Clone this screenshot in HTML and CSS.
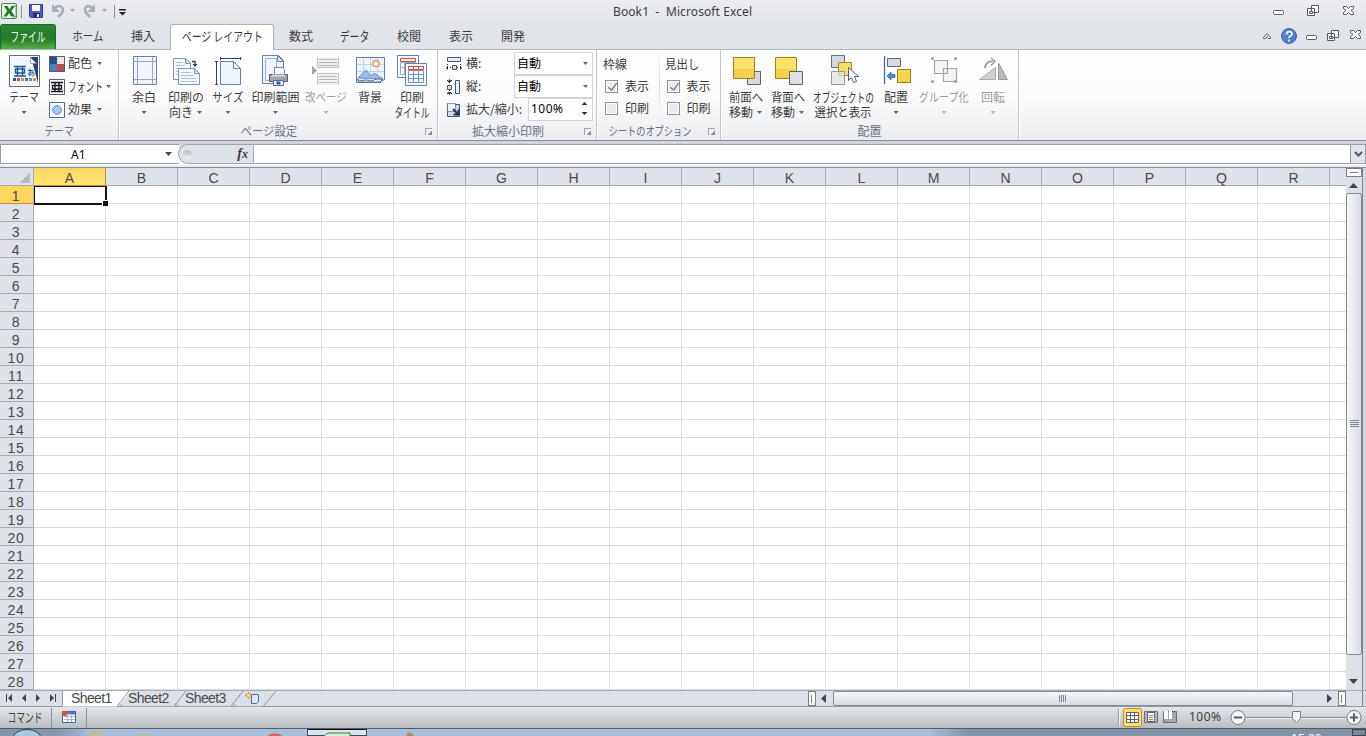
FILE: index.html
```html
<!DOCTYPE html>
<html lang="ja">
<head>
<meta charset="utf-8">
<title>Book1 - Microsoft Excel</title>
<link rel="stylesheet" href="styles.css">
</head>
<body>
<div class="app">
  <header class="titlebar">
    <svg class="qat" width="130" height="24" viewBox="0 0 130 24">
      <rect x="1.5" y="3.500" width="15" height="15" rx="1.500" fill="#e9f3e6" stroke="#3d8b43"/>
      <path d="M13 6h3v11h-3" fill="#fff" stroke="#69aa6c"/>
      <path d="M4 6h3.500l2 3.500L11.500 6H15l-3.600 5 3.600 5.500h-3.800L9 13l-2.200 3.500H3.500l3.700-5.500z" fill="#24762f"/>
      <path d="M21.500 5v13M114.500 5v13" stroke="#8b8f96"/>
      <path d="M29.500 4.500h13v13h-12l-1-1z" fill="#4c5dc9" stroke="#2f3c93"/>
      <path d="M32 5h8v6h-8z" fill="#f4f7fd"/><path d="M33 13h7v4h-7z" fill="#283064"/><path d="M37 14h2v3h-2z" fill="#e8edf7"/>
      <g fill="none" stroke="#a9afb8" stroke-width="2.500"><path d="M54 9c4-5 9-3 9 1 0 3-2 4-5 7"/><path d="M93 9c-4-5-8-3-8 1 0 3 2 4 5 7"/></g>
      <path d="M52 4v8h8zM95 4v8h-8z" fill="#a9afb8"/>
      <path d="M70 9h5l-2.500 3zM102 9h5l-2.500 3z" fill="#a2a7ae"/>
      <path d="M119 9h7v1.500h-7zM119 12h7l-3.500 3.500z" fill="#222"/>
    </svg>
    <div class="title">Book1&nbsp; -&nbsp; Microsoft Excel</div>
    <svg class="wbtn" width="96" height="24" viewBox="0 0 96 24" fill="#fff" stroke="#565b6e">
      <rect x="3.500" y="10.500" width="10" height="4" rx="1"/>
      <path d="M41.500 5.500h7v7h-7zM37.500 8.500h7v7h-7z"/><path d="M39.500 11.500h3v2h-3z"/>
      <path d="M73.500 6.500h3l2 2 2-2h3v2l-2.500 2 2.500 2v2h-3l-2-2-2 2h-3v-2l2.500-2-2.500-2z"/>
    </svg>
  </header>
  <nav class="tabs">
    <div class="tab file"><span class="k13 s68">ファイル</span></div>
    <div class="tab w63"><span class="s86">ホーム</span></div>
    <div class="tab w48">挿入</div>
    <div class="tab on"><span class="k13 s75">ページ レイアウト</span></div>
    <div class="tab">数式</div>
    <div class="tab"><span class="k13 s75">データ</span></div>
    <div class="tab">校閲</div>
    <div class="tab w50">表示</div>
    <div class="tab">開発</div>
    <svg class="tabbtn" width="106" height="24" viewBox="0 0 106 24" fill="#fff" stroke="#565b62">
      <path d="M3.500 12.500l3.500-4 3.500 4v1h-2l-1.500-2-1.500 2h-2z"/>
      <circle cx="29" cy="11" r="7.500" fill="#4d83d0" stroke="#3b67ad"/>
      <path d="M26.500 9.500c0-4 5.500-3.500 5.500-.8 0 2-3 2-3 4.300M29 14.500v2" fill="none" stroke="#fff" stroke-width="1.800"/>
      <rect x="46.500" y="10.500" width="10" height="4" rx="1"/>
      <path d="M71.500 5.500h7v7h-7zM67.500 8.500h7v7h-7zM69.500 11.500h3v2h-3z"/>
      <path d="M90.500 5.500h3l2 2 2-2h3v2l-2.500 2 2.500 2v2h-3l-2-2-2 2h-3v-2l2.500-2-2.500-2z"/>
    </svg>
  </nav>
  <section class="ribbon">
    <div class="group g-theme">
      <div class="gbody">
        <div class="big w48">
          <svg width="32" height="32" viewBox="0 0 32 32"><path d="M1.500.5h30v31h-30z" fill="#fff" stroke="#5b6b84"/><path d="M3 2h27v28H3z" fill="#f3f7fc"/><path d="M23 2h7v26z" fill="#26446f"/><path d="M22.500 2.500v6h6z" fill="#fff" stroke="#6b84a6" stroke-width=".7"/><path d="M6 11.500h12M6 21h12M9.500 12v9M14.500 12v9M7.500 14h9v4h-9z" fill="none" stroke="#1f579b" stroke-width="1.400"/><path d="M20 15.500h5M22 13.500v7M25 16.500c-1 4.500-4.500 4.500-4.500 2.500s5.500-3 5.500 0-2 2-2 2" fill="none" stroke="#1f579b"/><path d="M5 23h3v3H5z" fill="#2a5a94"/><path d="M9 23h3v3H9z" fill="#c44b45"/><path d="M13 23h3v3h-3z" fill="#91b04c"/><path d="M17 23h3v3h-3z" fill="#7b5c9e"/><path d="M21 23h3v3h-3z" fill="#3fa3bf"/><path d="M25 23h3v3h-3z" fill="#ef8b32"/></svg>
          <span class="s80">テーマ</span><i class="ar"></i>
        </div>
        <div class="smalls">
          <div class="small"><svg width="16" height="16"><path d="M0 0h8v8H0z" fill="#27508b"/><path d="M8 0h8v8H8z" fill="#e9e6df"/><path d="M0 8h8v8H0z" fill="#4b83c1"/><path d="M8 8h8v8H8z" fill="#c24a48"/><path d="M.5.5h15v15H.5z" fill="none" stroke="#4f5d77"/></svg><span>配色</span><i class="ar"></i></div>
          <div class="small"><svg width="16" height="16"><path d="M.5.5h15v15H.5z" fill="#fff" stroke="#4f5d77"/><path d="M2 3.500h12M2 12.500h12M6 4v8M10 4v8M3.500 6.500h9v3.500h-9z" fill="none" stroke="#111" stroke-width="1.300"/></svg><span class="font-l"><b class="k13 s68">フォント</b></span><i class="ar"></i></div>
          <div class="small"><svg width="16" height="16"><path d="M.5.5h15v15H.5z" fill="#fff" stroke="#4f6a94"/><circle cx="8" cy="8" r="4.300" fill="#a9caf3" stroke="#5d8ace"/></svg><span>効果</span><i class="ar"></i></div>
        </div>
      </div>
      <div class="gname"><span class="s80">テーマ</span></div>
    </div>
    <div class="group g-page">
      <div class="gbody">
        <div class="big w42">
          <svg width="32" height="32" viewBox="0 0 32 32"><path d="M5.500 1.500h23v28h-23z" fill="#f1f5fb" stroke="#6b7f9e"/><path d="M9.500 2v27M24.500 2v27M6 6.500h22M6 24.500h22" stroke="#94a7c2"/></svg>
          <span>余白</span><i class="ar"></i></div>
        <div class="big w42">
          <svg width="32" height="32" viewBox="0 0 32 32" fill="#f5f8fd" stroke="#7f96b9"><path d="M3.500 3.500h12l5 5v16h-17z"/><path d="M15.500 3.500v5h5z" fill="#d4e1f3"/><path d="M6 7.500h7M6 10.500h9M6 13.500h5M6 16.500h3M6 19.500h3" stroke="#afbfd6"/><path d="M8.500 13.500h16l5 5v11h-21z"/><path d="M24.500 13.500v5h5z" fill="#d4e1f3"/><path d="M11 17.500h10M11 20.500h12M11 23.500h15M11 26.500h15" stroke="#afbfd6"/><path d="M22 6.500h3V10" fill="none" stroke="#2c3f6c" stroke-width="1.300"/><path d="M22.500 9h5L25 12z" fill="#2c3f6c" stroke="none"/></svg>
          <span>印刷の</span><em>向き<i class="ar"></i></em></div>
        <div class="big w42">
          <svg width="32" height="32" viewBox="0 0 32 32"><path d="M8.500 6.500h13l7 7v16h-20z" fill="#eff4fc" stroke="#6680a5"/><path d="M21.500 6.500v7h7z" fill="#fff" stroke="#6680a5"/><path d="M8 3.500h21M8.500 2v3M28.500 2v3M4.500 7v23M3 6.500h3M3 29.500h3" fill="none" stroke="#253f86"/></svg>
          <span class="s86">サイズ</span><i class="ar"></i></div>
        <div class="big w53">
          <svg width="32" height="32" viewBox="0 0 32 32"><path d="M2.500.5h16l5 5v23h-21z" fill="#eff4fc" stroke="#6680a5"/><path d="M5.500 3.500h11v22h-11z" fill="none" stroke="#9db0cc"/><path d="M17.500.5v6h6z" fill="#dbe6f5" stroke="#6680a5"/><path d="M14.500 12.500h8l2 2v6h-10z" fill="#f7faff" stroke="#6c80a2"/><path d="M9.500 19.500h18v7h-18z" fill="#a2a7b1" stroke="#585e69"/><path d="M12 20.500h13" stroke="#d9dce2" stroke-width="2"/><path d="M24 24h2v1h-2z" fill="#4caf50"/><path d="M13.500 25.500h10v5h-10z" fill="#f1f6fe" stroke="#516c9a"/><path d="M16.500 28h4" stroke="#2a5ba3" stroke-width="3"/></svg>
          <span>印刷範囲</span><i class="ar"></i></div>
        <div class="big w48 off">
          <svg width="32" height="32" viewBox="0 0 32 32"><path d="M7.500 2v10.500h21V2M7.500 30V18.500h21V30" fill="#f1f1f3" stroke="#c0c1c4"/><path d="M9 4.500h18M9 7.500h18M9 10.500h18M9 21.500h18M9 24.500h18M9 27.500h18" stroke="#b5b6ba"/><path d="M2 11l5 4.500L2 20z" fill="#a0a2a5"/></svg>
          <span class="s86">改ページ</span><i class="ar"></i></div>
        <div class="big w40">
          <svg width="32" height="32" viewBox="0 0 32 32"><path d="M2.500 2.500h28v22l-4 3h-24z" fill="#edf4fc" stroke="#627da8"/><path d="M9.500 3v21M16.500 3v21M23.500 3v21M3 9.500h27M3 16.500h27" stroke="#c1d2e9"/><circle cx="22" cy="8.500" r="3.200" fill="#fff1da" stroke="#ed8e4e" stroke-width="1.300"/><path d="M4 23l8-8 5 6 3-3 9 6z" fill="#9dbbe8" stroke="#6b90c9"/><path d="M3 24c4 3 6 1 9 1s5 2 8 0 6 0 9-1l-3 3H5z" fill="#fff" stroke="#576a8d"/></svg>
          <span>背景</span></div>
        <div class="big w44">
          <svg width="32" height="32" viewBox="0 0 32 32" fill="#f8fbff" stroke="#657fa8"><path d="M1.500.5h21v22h-21z"/><path d="M4.500 7.500h15v12h-15zM8.500 8v12M13 8v12M4 12.500h15" stroke="#95aed0"/><path d="M4.500 3.500h15v3h-15z" fill="#fff" stroke="#d54c24"/><path d="M9.500 8.500h21v22h-21z"/><path d="M12.500 15.500h15v12h-15zM17.500 16v12M22.500 16v12M12 19.500h15M12 23.500h15" fill="#fff" stroke="#6d90c4"/><path d="M12.500 11.500h15v3h-15zM17.500 11v3M22.500 11v3" fill="#fff" stroke="#d54c24"/></svg>
          <span>印刷</span><em><b class="k13 s68">タイトル</b></em></div>
      </div>
      <div class="gname"><span class="s92">ページ設定</span><i class="launch"></i></div>
    </div>
    <div class="group g-scale">
      <div class="gbody rows">
        <div class="srow"><svg width="16" height="16"><path d="M1.500 1.500h13v4h-13z" fill="#e8f0fa" stroke="#3f5478"/><path d="M1.500 8v6M14.500 8v6M4 11.500h2M11 11.500h2" stroke="#222" stroke-dasharray="1 1"/><path d="M0 12l2-2v4zM16 12l-2-2v4z" fill="#222"/><path d="M6.500 9.500h4v4h-4z" fill="#ddd" stroke="#555"/></svg><label>横:</label><div class="combo">自動<i class="ar"></i></div></div>
        <div class="srow"><svg width="16" height="16"><path d="M9.500 1.500h4v13h-4z" fill="#e8f0fa" stroke="#3f5478"/><path d="M1 1.500h6M1 14.500h6M3.500 3v2M3.500 11v2" stroke="#222" stroke-dasharray="1 1"/><path d="M3.500 0l2 3h-4zM3.500 16l2-3h-4z" fill="#222"/><path d="M1.500 6.500h4v4h-4z" fill="#ddd" stroke="#555"/></svg><label>縦:</label><div class="combo">自動<i class="ar"></i></div></div>
        <div class="srow"><svg width="16" height="16"><path d="M1.500 2.500h12v12h-12z" fill="#cfdaeb" stroke="#41557c"/><path d="M1.500 1.500h8v8h-8z" fill="#eef4fb" stroke="#2a3e63" stroke-dasharray="1 1"/><path d="M7 7l5 5M7.500 12.500h5v-5" fill="none" stroke="#1e2e50" stroke-width="1.800"/></svg><label>拡大/縮小:</label><div class="combo spin">100%<svg width="7" height="15" viewBox="0 0 7 15"><path d="M.5 4L3.500 1l3 3zM.5 11l3 3 3-3z" fill="#333"/></svg></div></div>
      </div>
      <div class="gname"><span>拡大縮小印刷</span><i class="launch"></i></div>
    </div>
    <div class="group g-opts">
      <div class="gbody">
        <div class="opts"><div>枠線</div><div><i class="cb ck"></i>表示</div><div><i class="cb"></i>印刷</div></div>
        <div class="opts second"><div><span class="s92 left">見出し</span></div><div><i class="cb ck"></i>表示</div><div><i class="cb"></i>印刷</div></div>
      </div>
      <div class="gname"><span class="s77">シートのオプション</span><i class="launch"></i></div>
    </div>
    <div class="group g-arr">
      <div class="gbody">
        <div class="big w42"><svg width="32" height="32" viewBox="0 0 32 32"><path d="M17.500 16.500h13v13h-13z" fill="#d7dbe1" stroke="#5d646e"/><path d="M3.500 2.500h21v21h-21z" fill="#fbe06a" stroke="#9c7f23"/><path d="M4 14h20v9H4z" fill="#f6d04a"/></svg><span class="s92">前面へ</span><em>移動<i class="ar"></i></em></div>
        <div class="big w42"><svg width="32" height="32" viewBox="0 0 32 32"><path d="M3.500 2.500h21v21h-21z" fill="#fbe06a" stroke="#9c7f23"/><path d="M4 14h20v9H4z" fill="#f6d04a"/><path d="M17.500 16.500h13v13h-13z" fill="#dde1e6" stroke="#5d646e"/></svg><span class="s92">背面へ</span><em>移動<i class="ar"></i></em></div>
        <div class="big w68"><svg width="32" height="32" viewBox="0 0 32 32"><path d="M4.500.5h13v12h-13z" fill="#d5d9df" stroke="#656d78"/><path d="M11.500 7.500h13v13h-13z" fill="#f8dc65" stroke="#a3882c"/><path d="M4.500 16.500h13v13h-13z" fill="#dfe2e4" fill-opacity=".75" stroke="#92979e"/><path d="M21.500 12.500v13l3-3 2 5 3-1-2-5h4z" fill="#fff" stroke="#53657f"/></svg><span class="k13 s68">オブジェクトの</span><em><b class="s92">選択と表示</b></em></div>
        <div class="big w38"><svg width="32" height="32" viewBox="0 0 32 32"><path d="M4.500 1v28" stroke="#2f66b7" stroke-width="1.200"/><path d="M7.500 3.500h13v8h-13z" fill="#d7dbe1" stroke="#606873"/><path d="M17.500 14.500h13v13h-13z" fill="#f8d64c" stroke="#9c7f23"/><path d="M7 21l4-4v2.500h4v3h-4V25z" fill="#4d88d8" stroke="#265ba3" stroke-width=".7"/></svg><span>配置</span><i class="ar"></i></div>
        <div class="big w58 off"><svg width="32" height="32" viewBox="0 0 32 32"><path d="M6.500 5.500h13v13h-13zM15.500 13.500h13v13h-13z" fill="#ececef" fill-opacity=".6" stroke="#a3a3a5" stroke-width="1.200"/><circle cx="4.500" cy="3.500" r="1.500" fill="#999"/><circle cx="27.500" cy="3.500" r="1.500" fill="#999"/><circle cx="4.500" cy="26.500" r="1.500" fill="#999"/><circle cx="27.500" cy="26.500" r="1.500" fill="#999"/></svg><span class="s84">グループ化</span><i class="ar"></i></div>
        <div class="big w40 off"><svg width="32" height="32" viewBox="0 0 32 32"><path d="M18.500 24.500v-12l-16 12z" fill="#d0d0d2" stroke="#aaa"/><path d="M21.500 24.500V8l9 16.500z" fill="#b8b8bb" stroke="#999"/><path d="M8 13c0-5 4-7 8-6.500" fill="none" stroke="#999" stroke-width="1.700"/><path d="M14 3l4 3.500-4 4" fill="none" stroke="#999" stroke-width="1.500"/></svg><span>回転</span><i class="ar"></i></div>
      </div>
      <div class="gname"><span>配置</span></div>
    </div>
  </section>
  <section class="fbar">
    <div class="namebox"><span>A1</span><i class="ar dark"></i></div>
    <div class="fx"><i></i><b>f<small>x</small></b></div>
    <div class="finput"></div>
    <div class="fexp"><svg width="9" height="6" viewBox="0 0 9 6"><path d="M1 1l3.500 3.500L8 1" fill="none" stroke="#555" stroke-width="2"/></svg></div>
  </section>
  <section class="main">
    <div class="sheet">
      <div class="cols"><div class="corner"></div><div class="on">A</div><div>B</div><div>C</div><div>D</div><div>E</div><div>F</div><div>G</div><div>H</div><div>I</div><div>J</div><div>K</div><div>L</div><div>M</div><div>N</div><div>O</div><div>P</div><div>Q</div><div>R</div><div class="rest"></div></div>
      <div class="lower">
        <div class="rowsh"><div class="on">1</div><div>2</div><div>3</div><div>4</div><div>5</div><div>6</div><div>7</div><div>8</div><div>9</div><div>10</div><div>11</div><div>12</div><div>13</div><div>14</div><div>15</div><div>16</div><div>17</div><div>18</div><div>19</div><div>20</div><div>21</div><div>22</div><div>23</div><div>24</div><div>25</div><div>26</div><div>27</div><div>28</div></div>
        <div class="cells"><div class="cursor"><i></i></div></div>
      </div>
    </div>
    <div class="vscroll">
      <div class="vsplit"><i></i></div>
      <div class="varrow"><svg width="9" height="5"><path d="M0 5L4.500 0 9 5z" fill="#444"/></svg></div>
      <div class="vthumb"><i></i></div>
      <div class="vtrack"></div>
      <div class="varrow last"><svg width="9" height="5"><path d="M0 0h9L4.500 5z" fill="#444"/></svg></div>
    </div>
    <div class="edge"></div>
  </section>
  <section class="sheetbar">
    <svg class="navs" width="62" height="16"><path d="M6.500 3v8M55.500 3v8" stroke="#444"/><path d="M12 3v8L8 7zM26 3v8l-4-4zM36 3v8l4-4zM50 3v8l4-4z" fill="#444"/></svg>
    <div class="stabs">
      <svg width="220" height="16"><path d="M0 0h68L55 15.500H0z" fill="#fff"/><path d="M66 0L54 15.500M123 0l-12 15.500M180 0l-12 15.500M213 0l-13 15.500" stroke="#8f959e" fill="none"/><path d="M56 12l3 3.500h52l2-3.500 3 3.500h52l2-3.500 3 3.500h26" fill="none" stroke="#a2a8b1"/><path d="M188.500 3.500h7v7l-2 2h-5z" fill="#dce8f8" stroke="#536b98"/><path d="M182 4.500h7M185.500 1v7M183 2l5 5M188 2l-5 5" stroke="#d9902f"/><circle cx="185.500" cy="4.500" r="1.300" fill="#fff3c8"/></svg>
      <div class="names"><span>Sheet1</span><span>Sheet2</span><span>Sheet3</span></div>
    </div>
    <div class="hscroll">
      <div class="hsplit"><i></i></div>
      <div class="harrow"><svg width="5" height="9"><path d="M5 0v9L0 4.500z" fill="#444"/></svg></div>
      <div class="hthumb"><i></i></div>
      <div class="harrow right"><svg width="5" height="9"><path d="M0 0v9l5-4.500z" fill="#444"/></svg></div>
      <div class="hsplit"><i></i></div>
    </div>
    <div class="hcorner"></div><div class="edge"></div>
  </section>
  <footer class="status">
    <div class="cmd"><span class="k13 s68">コマンド</span></div>
    <div class="macro"><svg width="16" height="14"><path d="M1.500 1.500h13v11h-13z" fill="#fff" stroke="#47659e"/><path d="M2 2h12v2.500H2z" fill="#5479c4"/><path d="M3 6.500h11M3 9.500h11M6.500 5v7M10.500 5v7" stroke="#a5b8db"/><circle cx="3.500" cy="3.500" r="2.800" fill="#dd5136"/></svg></div>
    <div class="spacer"></div>
    <svg class="views" width="64" height="20"><path d="M.5 1v17" stroke="#999ea6"/><path d="M1.500 1v17" stroke="#f1f2f4"/><rect x="5.500" y=".5" width="18" height="18" rx="2" fill="#fedf70" stroke="#c38a2d"/><path d="M8.500 4.500h12v10h-12zM8 7.500h13M8 11.500h13M12.500 4v11M16.500 4v11" fill="#fff" stroke="#5e6065"/><path d="M26.500 3.500h13v11h-13z" fill="#b4b7bb" stroke="#6c6e73"/><path d="M29.500 4.500h7v9h-7z" fill="#fff" stroke="#666"/><path d="M31 7.500h4M31 9.500h4M31 11.500h4" stroke="#888"/><path d="M45.500 3.500h13v11h-13z" fill="#a5a8ac" stroke="#6c6e73"/><path d="M46 3h4v8h-4zM51 3h3v8h-3z" fill="#fff"/></svg>
    <div class="pct">100%</div>
    <svg class="zoomer" width="136" height="20"><path d="M16 9.500h100" stroke="#878d94"/><path d="M16 10.500h100" stroke="#eef0f2"/><g fill="#f3f4f6" stroke="#777d85"><circle cx="8" cy="9.500" r="7"/><circle cx="124" cy="9.500" r="7"/><path d="M62.500 3.500h8v7l-4 4-4-4z"/></g><path d="M4 9.500h8M120 9.500h8M124 5.500v8" stroke="#555b62" stroke-width="2"/></svg>
  </footer>
  <div class="taskbar">
    <svg class="orb" width="260" height="7"><ellipse cx="27" cy="9" rx="14" ry="8.500" fill="#a8c6df" stroke="#1b4566"/><path d="M90 7c4-5 10-5 13-2" fill="none" stroke="#e0b64a" stroke-width="2"/><path d="M138 6h13v2h-13z" fill="#d8b868"/></svg>
    <svg class="red" width="47" height="7"><ellipse cx="15" cy="9" rx="8" ry="4.500" fill="#db6350"/></svg>
    <div class="task"><svg width="30" height="5"><path d="M1 6c2-4 4-5 7-5h20v5z" fill="#dceeda" stroke="#307e3a"/></svg></div>
    <svg class="tan" width="60" height="7"><path d="M40 7V4q4-2 7 3z" fill="#b58a5e"/></svg>
    <div class="clock">15:00</div>
    <div class="peek"></div>
  </div>
</div>
</body>
</html>
```
FILE: styles.css
```css
* { box-sizing: border-box; }
body { margin: 0; overflow: hidden; font: 12px/15px "Noto Sans CJK JP", sans-serif; color: #3b3b3b; }
svg { display: block; flex: none; }
i, em { font-style: normal; }
b { font-weight: 400; display: inline-block; }
.app { width: 1366px; height: 736px; display: flex; flex-direction: column; overflow: hidden; background: #fff; }
.s68, .s72, .s75, .s77, .s80, .s84, .s86, .s92 { display: inline-block; white-space: nowrap; }
.s68 { transform: scaleX(.67); }
.s72 { transform: scaleX(.72); }
.s75 { transform: scaleX(.76); }
.s77 { transform: scaleX(.77); }
.s80 { transform: scaleX(.82); }
.s84 { transform: scaleX(.84); }
.s86 { transform: scaleX(.87); }
.s92 { transform: scaleX(.95); }
.k13 { font-size: 13px; }
.left { transform-origin: left; }
.w38 { width: 38px; } .w40 { width: 40px; } .w42 { width: 42px; } .w44 { width: 44px; }
.w48 { width: 48px; } .w53 { width: 53px; } .w58 { width: 58px; } .w68 { width: 68px; }

.titlebar { height: 24px; display: flex; background: linear-gradient(#ebecef, #e3e6ea); }
.title { flex: 1; padding-left: 483px; font: 12px/23px "Noto Sans", sans-serif; letter-spacing: .1px; color: #3b3b3b; }

.tabs { height: 26px; display: flex; align-items: stretch; padding-top: 1px; background: #e1e5e9; border-bottom: 1px solid #b0b5bb; }
.tab { flex: none; width: 54px; display: flex; justify-content: center; line-height: 22px; height: 24px; white-space: nowrap; }
.tab.w63 { width: 63px; } .tab.w48 { width: 48px; } .tab.w50 { width: 50px; }
.tab.file { width: 56px; margin-top: -1px; height: 25px; color: #fff; border: 1px solid #1f6a26; border-bottom: 0; border-radius: 3px 3px 0 0; background: linear-gradient(#2a862f, #23792a 55%, #54b043); line-height: 22px; }
.tab.on { width: 104px; margin-left: 3px; margin-top: -1px; height: 26px; background: #fff; border: 1px solid #adb2b9; border-bottom: 0; border-radius: 3px 3px 0 0; }
.tabbtn { margin-left: auto; }

.ribbon { height: 91px; display: flex; background: linear-gradient(#fff, #fbfbfc 55%, #eaecef); border-bottom: 1px solid #898d96; }
.group { display: flex; flex-direction: column; border-right: 1px solid #c2c5ca; box-shadow: 1px 0 #fff; }
.g-theme { width: 119px; } .g-page { width: 319px; } .g-scale { width: 159px; } .g-opts { width: 124px; } .g-arr { width: 298px; }
.gbody { height: 73px; display: flex; }
.g-page .gbody, .g-arr .gbody { padding-left: 4px; }
.gname { height: 16px; line-height: 15px; color: #697083; display: flex; justify-content: center; position: relative; white-space: nowrap; }
.g-page .gname, .g-scale .gname, .g-opts .gname { padding-right: 18px; }
.launch { position: absolute; right: 5px; top: 5px; width: 7px; height: 7px; border-left: 1px solid #a0a4ab; border-top: 1px solid #a0a4ab; }
.launch::after { content: ""; position: absolute; right: 0; bottom: 0; width: 4px; height: 4px; background: linear-gradient(135deg, transparent 40%, #8a8f96 40%); }
.big { flex: none; height: 70px; padding-top: 5px; display: flex; flex-direction: column; align-items: center; white-space: nowrap; }
.big > span { margin-top: 2px; height: 15px; line-height: 15px; }
.big > em { height: 15px; line-height: 15px; display: flex; align-items: center; gap: 4px; }
.big > .ar { margin-top: 7px; }
.big > em > .ar { margin-top: 2px; margin-right: 1px; }
.ar { display: block; flex: none; width: 5px; height: 3px; background: #62666c; clip-path: polygon(0 0, 100% 0, 50% 100%); }
.off { color: #9b9da0; }
.off .ar { background: #b5b7ba; }
.smalls { padding: 2px 0 0 1px; display: flex; flex-direction: column; }
.small { height: 23px; display: flex; align-items: center; }
.small span { margin: -2px 5px 0 3px; }
.small .font-l { width: 34px; margin-right: 4px; }
.font-l b { transform-origin: left; }

.rows { flex-direction: column; padding: 2px 3px 0 8px; }
.srow { height: 23px; display: flex; align-items: center; white-space: nowrap; }
.srow label { margin-left: 4px; flex: 1; padding-bottom: 3px; }
.combo { width: 79px; height: 23px; line-height: 17px; border: 1px solid #d0d3d8; background: #fff; color: #000; display: flex; align-items: center; justify-content: space-between; padding: 0 4px 2px 2px; }
.combo .ar { margin-top: 2px; }
.spin { width: 65px; font: 12px "Noto Sans", sans-serif; letter-spacing: .5px; }
.opts { width: 62px; padding: 3px 0 0 6px; line-height: 22px; white-space: nowrap; }
.opts div { height: 22px; display: flex; align-items: center; }
.opts.second { background: linear-gradient(transparent, #d5d7da, transparent) 0 0 / 1px 68px no-repeat; }
.cb { width: 13px; height: 13px; margin: 1px 7px 0 2px; border: 1px solid #8e9196; background: #e9eaec; box-shadow: inset 0 0 0 1px #fff; }
.ck::after { content: ""; display: block; width: 4px; height: 8px; margin: 0 0 0 4px; border: solid #555b6a; border-width: 0 1.5px 1.5px 0; transform: rotate(35deg); }

.fbar { height: 27px; display: flex; padding: 3px 0 3px; background: linear-gradient(#d0d3d9 3px, #fff 24px, #eceef1 24px); border-bottom: 1px solid #878c94; }
.namebox { width: 179px; border: 1px solid #989da6; border-right: 0; background: #fff; display: flex; align-items: center; color: #000; font: 12px "Noto Sans", sans-serif; padding: 0 7px 0 70px; justify-content: space-between; }
.namebox .ar { width: 7px; height: 4px; background: #444; }
.fx { width: 76px; margin-left: -1px; border: 1px solid #a0a5ad; border-radius: 10px 0 0 10px; background: #dfe2e8; display: flex; align-items: center; justify-content: space-between; padding: 0 5px 0 4px; }
.fx i { width: 9px; height: 9px; border-radius: 50%; background: linear-gradient(#b9bdc3, #f2f3f5); }
.fx b { font: italic bold 14px/16px "Liberation Serif", serif; }
.fx small { font-size: 12px; }
.finput { flex: 1; background: #fff; border: solid #989da6; border-width: 1px 0; }
.fexp { width: 16px; background: #e0e4ea; border: 1px solid #989da6; display: flex; align-items: center; justify-content: center; }

.main { height: 522px; display: flex; }
.sheet { width: 1346px; font-family: "Liberation Sans", sans-serif; font-size: 14px; color: #4a4a4a; overflow: hidden; }
.cols { height: 18px; display: flex; background: #dfe2e8; border-bottom: 1px solid #a6abb3; }
.cols div { flex: none; width: 72px; height: 18px; line-height: 21px; text-align: center; border-right: 1px solid #a6abb3; }
.cols .corner { width: 34px; background: linear-gradient(135deg, transparent 50%, #b7bbc2 50%) 20px 5px / 10px 10px no-repeat; }
.cols .on { background: linear-gradient(#fdd563, #ffe873); border-right-color: #c18c35; border-bottom: 1px solid #c18c35; }
.cols .rest { width: 16px; border: 0; }
.lower { display: flex; }
.rowsh { width: 34px; background: #dfe2e8; border-right: 1px solid #a6abb3; letter-spacing: .7px; }
.rowsh div { height: 18px; line-height: 20px; text-align: center; padding-right: 1px; border-bottom: 1px solid #a6abb3; }
.rowsh .on { background: #ffd75f; border-color: #c18c35; }
.cells { flex: 1; height: 504px; background: repeating-linear-gradient(90deg, transparent 0 71px, #dadcdd 71px 72px), repeating-linear-gradient(transparent 0 17px, #dadcdd 17px 18px), #fff; }
.cursor { width: 73px; height: 19px; border: 2px solid #111; border-left-width: 1px; border-top-width: 1px; position: relative; }
.cursor i { position: absolute; right: -3px; bottom: -3px; width: 6px; height: 6px; background: #111; border: solid #fff; border-width: 1px 0 0 1px; }
.vscroll { width: 16px; display: flex; flex-direction: column; background: #dce0e7; }
.vsplit { height: 9px; border: 1px solid #777c88; background: #fff; padding: 3px 3px 0; }
.vsplit i { display: block; height: 1px; background: #777c88; }
.varrow { height: 16px; display: flex; align-items: center; justify-content: center; padding-right: 1px; }
.vthumb { height: 462px; border: 1px solid #868c96; border-radius: 2px; background: linear-gradient(90deg, #f6f7fa, #d8dce4); display: flex; align-items: center; justify-content: center; }
.vthumb i { width: 9px; height: 8px; background: repeating-linear-gradient(#7f858e 0 1px, transparent 1px 2px); }
.vtrack { height: 18px; }
.edge { width: 4px; border-left: 1px solid #7e848e; background: #d5d9df; }

.sheetbar { height: 17px; display: flex; background: #dce0e8; border-top: 1px solid #a4a9b2; border-bottom: 1px solid #90959e; }
.navs { border-right: 1px solid #9a9fa8; width: 63px; }
.stabs { width: 745px; display: grid; }
.stabs > * { grid-area: 1 / 1; }
.names { display: flex; padding-left: 8px; font: 14px/15px "Liberation Sans", sans-serif; color: #4a4a4a; z-index: 1; letter-spacing: -.6px; }
.names span { width: 57px; white-space: nowrap; }
.hscroll { width: 538px; display: flex; }
.hsplit { width: 8px; border: 1px solid #777c88; background: #fff; padding: 3px 0 0 2px; }
.hsplit i { display: block; width: 1px; height: 8px; background: #777c88; }
.harrow { width: 17px; display: flex; align-items: center; justify-content: center; padding-right: 2px; }
.harrow.right { width: 45px; padding-left: 28px; padding-right: 0; }
.hthumb { width: 460px; border: 1px solid #868c96; border-radius: 2px; background: linear-gradient(#f4f6f9, #d8dce4); display: flex; align-items: center; justify-content: center; }
.hthumb i { width: 8px; height: 7px; background: repeating-linear-gradient(90deg, #7f858e 0 1px, transparent 1px 2px); }
.hcorner { width: 16px; }

.status { height: 22px; display: flex; align-items: center; background: linear-gradient(#e5e7ea, #b8bdc2); border-bottom: 1px solid #545b64; font-size: 12px; }
.cmd { width: 52px; height: 20px; line-height: 18px; border-right: 1px solid #8e939b; display: flex; justify-content: center; white-space: nowrap; padding-right: 1px; }
.macro { width: 35px; height: 20px; padding: 2px 0 0 9px; border-right: 1px solid #8e939b; }
.spacer { flex: 1; }
.pct { width: 48px; padding-left: 7px; font: 12px/19px "Noto Sans", sans-serif; letter-spacing: .5px; margin-top: -2px; }

.taskbar { height: 7px; display: flex; overflow: hidden; background: linear-gradient(90deg, #8293a8 0, #8799b0 60px, #a5bfdc 90px, #a5bfdc 930px, #8093a9 970px); }
.task { width: 60px; border: 1px solid #3f4b59; border-top-color: #111; background: #dce6f1; padding: 2px 0 0 14px; }
.clock { margin-left: auto; width: 61px; color: #fff; font: 12px/14px "Noto Sans", sans-serif; padding-top: 3px; }
.peek { width: 14px; background: #7d8793; border: 1px solid #3e4751; }
```
